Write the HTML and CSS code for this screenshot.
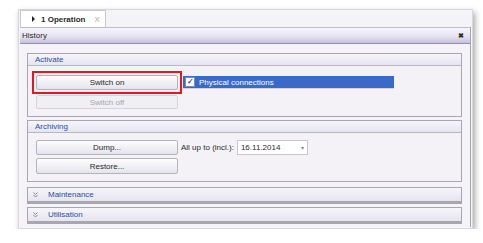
FILE: index.html
```html
<!DOCTYPE html>
<html lang="en">
<head>
    <meta charset="UTF-8">
    <title>History</title>
    <link rel="stylesheet" href="styles.css">
</head>
<body>
    <div id="window">
        <div class="tabstrip">
            <div class="tab">
                <span class="tab-arrow"></span>
                <span class="tab-title">1 Operation</span>
                <span class="tab-close">X</span>
            </div>
        </div>
        <div class="panel">
            <div class="panel-head">
                <span>History</span>
                <span class="panel-close">&#10006;</span>
            </div>
            <div class="panel-body">
                <div class="group">
                    <div class="group-head">Activate</div>
                    <div class="group-body">
                        <div class="row">
                            <div class="highlight">
                                <button class="btn">Switch on</button>
                            </div>
                            <label class="check-row">
                                <span class="checkbox">&#10003;</span>
                                Physical connections
                            </label>
                        </div>
                        <div class="row">
                            <button class="btn off" disabled>Switch off</button>
                        </div>
                    </div>
                </div>

                <div class="group">
                    <div class="group-head">Archiving</div>
                    <div class="group-body archive">
                        <div class="row">
                            <button class="btn">Dump...</button>
                            <span class="field-label">All up to (incl.):</span>
                            <div class="date-box">
                                <span>16.11.2014</span>
                                <span class="drop">&#9662;</span>
                            </div>
                        </div>
                        <div class="row">
                            <button class="btn tall">Restore...</button>
                        </div>
                    </div>
                </div>

                <div class="group collapsed first">
                    <div class="group-head">
                        <svg class="chev" width="5" height="6" viewBox="0 0 5 6">
                            <path d="M0.5 0.5 L2.5 2.5 L4.5 0.5 M0.5 3 L2.5 5 L4.5 3" fill="none" stroke="#888" stroke-width="1"/>
                        </svg>
                        Maintenance
                    </div>
                </div>
                <div class="group collapsed">
                    <div class="group-head">
                        <svg class="chev" width="5" height="6" viewBox="0 0 5 6">
                            <path d="M0.5 0.5 L2.5 2.5 L4.5 0.5 M0.5 3 L2.5 5 L4.5 3" fill="none" stroke="#888" stroke-width="1"/>
                        </svg>
                        Utilisation
                    </div>
                </div>
            </div>
        </div>
    </div>
</body>
</html>
```

FILE: styles.css
```css
body {
    margin: 0;
    background-color: #fff;
    font-family: "Liberation Sans", Arial, sans-serif;
    font-size: 8px;
    color: #2a2a2a;
}
#window {
    margin: 9px 0 0 18px;
    width: 455px;
    height: 220px;
    background-color: #f6f5f9;
    border: 1px solid #d8d7dd;
    box-sizing: border-box;
    box-shadow: 2px 3px 6px rgba(0, 0, 0, 0.35);
    display: flex;
    flex-direction: column;
}
.tabstrip {
    height: 17px;
    display: flex;
    padding-left: 1px;
    background-color: #f4f3f7;
}
.tab {
    width: 86px;
    display: flex;
    align-items: center;
    padding-left: 11px;
    box-sizing: border-box;
    background-color: #fff;
    border: 1px solid #c9c8cf;
    border-bottom: none;
}
.tab-arrow {
    width: 0;
    height: 0;
    border-top: 3px solid transparent;
    border-bottom: 3px solid transparent;
    border-left: 3px solid #222;
    margin-right: 6px;
}
.tab-title {
    font-weight: bold;
}
.tab-close {
    color: #aaa;
    margin-left: 9px;
}
.panel {
    flex: 1;
    margin: 0 1px 1px 1px;
    display: flex;
    flex-direction: column;
    border-right: 1px solid #a6a5ad;
}
.panel-head {
    height: 15px;
    display: flex;
    align-items: center;
    justify-content: space-between;
    padding: 0 6px 0 2px;
    background: linear-gradient(#f6f5fb, #e6e3f1 55%, #c6c1dc);
    border-top: 1px solid #c0bccf;
    border-bottom: 1px solid #948fb3;
}
.panel-close {
    font-size: 7px;
    font-weight: bold;
}
.panel-body {
    flex: 1;
    padding: 9px 8px 0 7px;
    background-color: #f5f3f8;
    display: flex;
    flex-direction: column;
    gap: 3px;
}
.group {
    border: 1px solid #a8a7b0;
    background-color: #f4f2f7;
}
.group-head {
    height: 11px;
    display: flex;
    align-items: center;
    padding-left: 7px;
    color: #2c4d9d;
    background: linear-gradient(#f5f5fa, #e6e5ef);
    border-bottom: 1px solid #b9b8c2;
}
.group-body {
    padding: 9px 8px 7px 8px;
    display: flex;
    flex-direction: column;
    gap: 5px;
}
.group-body.archive {
    padding-top: 7px;
    padding-bottom: 7px;
    gap: 3px;
}
.row {
    display: flex;
    align-items: center;
}
.btn {
    width: 142px;
    height: 15px;
    padding: 0;
    font-family: inherit;
    font-size: 8px;
    color: #2a2a2a;
    border: 1px solid #b3b3bc;
    border-radius: 2px;
    background: linear-gradient(#fdfdfe, #e4e4ec);
}
.btn.tall {
    height: 16px;
}
.btn.off {
    height: 14px;
}
.btn:disabled {
    color: #a8a8b0;
    border-color: #d4d4da;
    background: #f0eff4;
}
.highlight {
    position: relative;
}
.highlight::after {
    content: "";
    position: absolute;
    left: -4px;
    top: -4px;
    right: -4px;
    bottom: -4px;
    border: 2px solid #e3191f;
}
.check-row {
    width: 211px;
    height: 13px;
    margin-left: 5px;
    display: flex;
    align-items: center;
    gap: 4px;
    padding-left: 2px;
    box-sizing: border-box;
    background-color: #3a69c9;
    color: #fff;
    border-bottom: 1px solid #d0d0d8;
}
.checkbox {
    width: 8px;
    height: 8px;
    background-color: #fff;
    color: #2f4f8f;
    border: 1px solid #7a8fb8;
    font-size: 8px;
    line-height: 8px;
    text-align: center;
    font-weight: bold;
}
.field-label {
    margin-left: 3px;
}
.date-box {
    width: 71px;
    height: 15px;
    margin-left: 3px;
    display: flex;
    align-items: center;
    justify-content: space-between;
    padding: 0 3px;
    box-sizing: border-box;
    background-color: #fff;
    border: 1px solid #c8c7d0;
}
.drop {
    color: #888;
    font-size: 6px;
}
.collapsed.first {
    margin-top: 2px;
}
.collapsed .group-head {
    height: 13px;
    padding-left: 5px;
    border-bottom: 2px solid #a8a7b0;
}
.chev {
    margin-right: 10px;
}
```
